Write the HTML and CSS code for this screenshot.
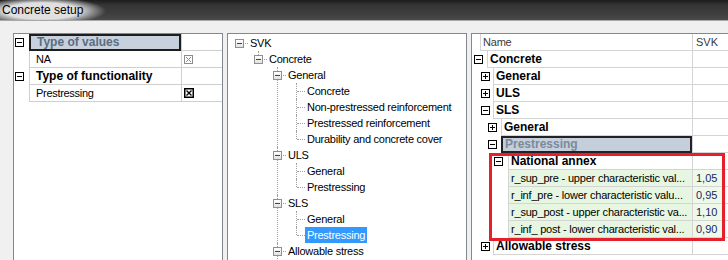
FILE: index.html
```html
<!DOCTYPE html>
<html lang="en">
<head>
  <meta charset="UTF-8">
  <title>Concrete setup</title>
  <link rel="stylesheet" href="styles.css">
</head>
<body>
  <div class="titlebar"><span>Concrete setup</span></div>

  <div class="content">
    <!-- Type of values / functionality -->
    <div class="panel props">
      <div class="prow">
        <div class="pexp"><span class="xbox"></span></div>
        <div class="pname sel">Type of values</div>
        <div class="pval"></div>
      </div>
      <div class="prow">
        <div class="pexp"></div>
        <div class="pname">NA</div>
        <div class="pval">
          <svg class="chk" width="9" height="9" viewBox="0 0 9 9"><rect x="0.5" y="0.5" width="8" height="8" fill="#fff" stroke="#8c8c8c"/><path d="M2 2L7 7M7 2L2 7" stroke="#8c8c8c"/></svg>
        </div>
      </div>
      <div class="prow">
        <div class="pexp"><span class="xbox"></span></div>
        <div class="pname cat">Type of functionality</div>
        <div class="pval"></div>
      </div>
      <div class="prow">
        <div class="pexp"></div>
        <div class="pname">Prestressing</div>
        <div class="pval">
          <svg class="chk" width="10" height="10" viewBox="0 0 10 10"><rect x="0.75" y="0.75" width="8.5" height="8.5" fill="#fff" stroke="#000" stroke-width="1.5"/><path d="M2.5 2.5L7.5 7.5M7.5 2.5L2.5 7.5" stroke="#000" stroke-width="1.3"/></svg>
        </div>
      </div>
    </div>

    <!-- Code tree -->
    <div class="panel treebox">
      <ul class="tree">
        <li class="last">
          <div class="trow"><span class="tbox"></span><span class="tlabel">SVK</span></div>
          <ul>
            <li class="last">
              <div class="trow"><span class="tbox"></span><span class="tlabel">Concrete</span></div>
              <ul>
                <li>
                  <div class="trow"><span class="tbox"></span><span class="tlabel">General</span></div>
                  <ul>
                    <li><div class="trow"><span class="tlabel">Concrete</span></div></li>
                    <li><div class="trow"><span class="tlabel">Non-prestressed reinforcement</span></div></li>
                    <li><div class="trow"><span class="tlabel">Prestressed reinforcement</span></div></li>
                    <li class="last"><div class="trow"><span class="tlabel">Durability and concrete cover</span></div></li>
                  </ul>
                </li>
                <li>
                  <div class="trow"><span class="tbox"></span><span class="tlabel">ULS</span></div>
                  <ul>
                    <li><div class="trow"><span class="tlabel">General</span></div></li>
                    <li class="last"><div class="trow"><span class="tlabel">Prestressing</span></div></li>
                  </ul>
                </li>
                <li>
                  <div class="trow"><span class="tbox"></span><span class="tlabel">SLS</span></div>
                  <ul>
                    <li><div class="trow"><span class="tlabel">General</span></div></li>
                    <li class="last"><div class="trow"><span class="tlabel selected">Prestressing</span></div></li>
                  </ul>
                </li>
                <li class="more">
                  <div class="trow"><span class="tbox"></span><span class="tlabel">Allowable stress</span></div>
                </li>
              </ul>
            </li>
          </ul>
        </li>
      </ul>
    </div>

    <!-- Parameter grid -->
    <div class="panel grid">
      <div class="grow head">
        <div class="gname"><div class="gind" style="width:8px"></div><div class="gcell">Name</div></div>
        <div class="gval">SVK</div>
        <div class="grest"></div>
      </div>
      <div class="grow">
        <div class="gname"><div class="gind" style="width:15px"><span class="xbox"></span></div><div class="gcell cat">Concrete</div></div>
        <div class="gval"></div><div class="grest"></div>
      </div>
      <div class="grow">
        <div class="gname"><div class="gind l1"><span class="xbox plus"></span></div><div class="gcell cat">General</div></div>
        <div class="gval"></div><div class="grest"></div>
      </div>
      <div class="grow">
        <div class="gname"><div class="gind l1"><span class="xbox plus"></span></div><div class="gcell cat">ULS</div></div>
        <div class="gval"></div><div class="grest"></div>
      </div>
      <div class="grow">
        <div class="gname"><div class="gind l1"><span class="xbox"></span></div><div class="gcell cat">SLS</div></div>
        <div class="gval"></div><div class="grest"></div>
      </div>
      <div class="grow">
        <div class="gname"><div class="gind l2"><span class="xbox plus"></span></div><div class="gcell cat">General</div></div>
        <div class="gval"></div><div class="grest"></div>
      </div>
      <div class="grow">
        <div class="gname"><div class="gind l2"><span class="xbox"></span></div><div class="gcell cat sel">Prestressing</div></div>
        <div class="gval"></div><div class="grest"></div>
      </div>
      <div class="grow">
        <div class="gname"><div class="gind l3"><span class="xbox"></span></div><div class="gcell cat">National annex</div></div>
        <div class="gval"></div><div class="grest"></div>
      </div>
      <div class="grow">
        <div class="gname"><div class="gind l3"></div><div class="gcell data">r_sup_pre - upper characteristic val...</div></div>
        <div class="gval data">1,05</div><div class="grest"></div>
      </div>
      <div class="grow">
        <div class="gname"><div class="gind l3"></div><div class="gcell data">r_inf_pre - lower characteristic valu...</div></div>
        <div class="gval data">0,95</div><div class="grest"></div>
      </div>
      <div class="grow">
        <div class="gname"><div class="gind l3"></div><div class="gcell data">r_sup_post - upper characteristic va...</div></div>
        <div class="gval data">1,10</div><div class="grest"></div>
      </div>
      <div class="grow">
        <div class="gname"><div class="gind l3"></div><div class="gcell data">r_inf_ post - lower characteristic val...</div></div>
        <div class="gval data">0,90</div><div class="grest"></div>
      </div>
      <div class="grow">
        <div class="gname"><div class="gind l1"><span class="xbox plus"></span></div><div class="gcell cat">Allowable stress</div></div>
        <div class="gval"></div><div class="grest"></div>
      </div>

      <div class="highlight"></div>
    </div>
  </div>
</body>
</html>
```

FILE: styles.css
```css
/* Base */
body {
  margin: 0;
  width: 728px;
  height: 260px;
  overflow: hidden;
  background: #f0f0f0;
  font-family: 'Liberation Sans', Arial, sans-serif;
  color: #000;
}

/* Window title */
.titlebar {
  height: 20px;
  border-bottom: 1px solid #a8a8a8;
  background:
    radial-gradient(ellipse 64px 14px at 42px 11px, rgba(224, 224, 224, 1) 58%, rgba(224, 224, 224, 0) 100%),
    linear-gradient(#1c1c1c, #353535 25%, #3e3e3e 70%, #4a4a4a);
}

.titlebar span {
  display: block;
  padding: 3px 0 0 2px;
  font-size: 12px;
  line-height: 14px;
}

.content {
  display: flex;
  gap: 4px;
  padding: 12px 0 0 13px;
}

.panel {
  position: relative;
  flex: none;
  height: 240px;
  box-sizing: border-box;
  background: #fff;
  border: 1px solid #828790;
  overflow: hidden;
}

/* Left property list */
.props {
  width: 210px;
}

.prow {
  display: flex;
  height: 17px;
}

.pexp {
  width: 15px;
  flex: none;
  display: flex;
  align-items: center;
  padding-left: 1px;
  box-sizing: border-box;
}

.pname {
  width: 152px;
  flex: none;
  box-sizing: border-box;
  border-left: 1px solid #cfcfcf;
  border-bottom: 1px solid #cfcfcf;
  padding-left: 6px;
  font-size: 11px;
  letter-spacing: -0.3px;
  line-height: 16px;
  white-space: nowrap;
}

.pname.cat {
  font-size: 12px;
  font-weight: bold;
  letter-spacing: 0;
}

.pname.sel {
  border: 2px solid #1e1e1e;
  padding-left: 6px;
  background: #c6d1dd;
  color: #5b6c81;
  font-size: 12px;
  font-weight: bold;
  letter-spacing: 0;
  line-height: 13px;
}

.pval {
  flex: 1;
  display: flex;
  align-items: center;
  padding-left: 2px;
  border-left: 1px solid #cfcfcf;
  border-bottom: 1px solid #cfcfcf;
}

.chk {
  display: block;
}

/* Expander box used in both grids */
.xbox {
  position: relative;
  display: block;
  width: 9px;
  height: 9px;
  box-sizing: border-box;
  border: 1px solid #000;
  background: #fff;
}

.xbox::before {
  content: "";
  position: absolute;
  left: 1px;
  right: 1px;
  top: 3px;
  height: 1px;
  background: #000;
}

.xbox.plus::after {
  content: "";
  position: absolute;
  top: 1px;
  bottom: 1px;
  left: 3px;
  width: 1px;
  background: #000;
}

/* Middle tree */
.treebox {
  width: 240px;
}

.tree, .tree ul {
  list-style: none;
  margin: 0;
  padding: 0;
}

.tree {
  padding: 1px 0 0 7px;
}

.tree ul {
  padding-left: 19px;
}

.tree li {
  position: relative;
}

.tree li::before {
  content: "";
  position: absolute;
  left: 4px;
  top: 0;
  bottom: 0;
  border-left: 1px dotted #a0a0a0;
}

.tree li.last::before {
  bottom: auto;
  height: 8px;
}

/* siblings continue below the visible area */
.tree li.more::before {
  bottom: -20px;
}

.tree > li::before {
  display: none;
}

.trow {
  position: relative;
  display: flex;
  align-items: center;
  height: 16px;
}

.trow::before {
  content: "";
  position: absolute;
  left: 5px;
  width: 8px;
  top: 8px;
  border-top: 1px dotted #a0a0a0;
}

.tbox {
  position: absolute;
  left: 0;
  top: 4px;
  z-index: 1;
  width: 9px;
  height: 9px;
  box-sizing: border-box;
  border: 1px solid #8f8f8f;
  background: linear-gradient(#ffffff, #e2e2e2);
}

.tbox::before {
  content: "";
  position: absolute;
  left: 1px;
  right: 1px;
  top: 3px;
  height: 1px;
  background: #24418a;
}

.tlabel {
  margin-left: 13px;
  padding: 0 2px;
  font-size: 11px;
  letter-spacing: -0.25px;
  line-height: 16px;
  white-space: nowrap;
}

.tlabel.selected {
  background: #3399ff;
  color: #fff;
}

/* Right parameter grid */
.grid {
  width: 280px;
}

.grow {
  display: flex;
  height: 17px;
}

.gname {
  display: flex;
  width: 220px;
  flex: none;
}

.gind {
  flex: none;
  display: flex;
  align-items: center;
  box-sizing: border-box;
  border-bottom: 1px solid transparent;
}

.gind .xbox {
  margin-left: 2px;
}

.gind.l1 { width: 21px; }
.gind.l1 .xbox { margin-left: 9px; }
.gind.l2 { width: 29px; }
.gind.l2 .xbox { margin-left: 16px; }
.gind.l3 { width: 36px; }
.gind.l3 .xbox { margin-left: 22px; }

.gcell {
  flex: 1;
  min-width: 0;
  box-sizing: border-box;
  border-left: 1px solid #d4d4d4;
  border-bottom: 1px solid #d4d4d4;
  padding-left: 2px;
  font-size: 11px;
  letter-spacing: -0.2px;
  line-height: 16px;
  white-space: nowrap;
  overflow: hidden;
}

.head .gcell {
  color: #3a3a3a;
}

.gcell.cat {
  font-size: 12px;
  font-weight: bold;
  letter-spacing: 0;
}

.gcell.sel {
  border: 2px solid #222;
  background: #c4cfdb;
  color: #7b8a9c;
  line-height: 13px;
}

.gcell.data {
  background: #e7f6e1;
}

.gval {
  width: 34px;
  flex: none;
  box-sizing: border-box;
  border-left: 1px solid #d4d4d4;
  border-bottom: 1px solid #d4d4d4;
  padding-left: 3px;
  font-size: 11px;
  line-height: 16px;
  color: #3a3a3a;
}

.gval.data {
  background: #eef9ea;
  color: #1c1f62;
}

.grest {
  flex: 1;
  border-bottom: 1px solid #d4d4d4;
}

/* Red annotation frame */
.highlight {
  position: absolute;
  left: 17px;
  top: 119px;
  width: 236px;
  height: 88px;
  box-sizing: border-box;
  border: 3px solid #e3202b;
}
```
